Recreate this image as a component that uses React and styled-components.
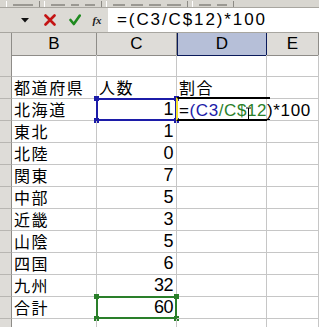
import styled, { createGlobalStyle } from "styled-components";

const GlobalStyle = createGlobalStyle`
  html, body {
    margin: 0;
    padding: 0;
    background: #ffffff;
    overflow: hidden;
  }
  body {
    font-family: "Noto Sans CJK JP", "Liberation Sans", sans-serif;
  }
`;

const Window = styled.div`
  width: 319px;
  height: 327px;
  overflow: hidden;
  background: #ffffff;
`;

const Toolbar = styled.div`
  height: 8px;
  background: #d8d6d0;
  border-bottom: 1px solid #a8a6a0;
  display: flex;
  align-items: flex-end;
  gap: 4px;
  padding-left: 6px;
  box-sizing: border-box;
  overflow: hidden;
`;

const ToolGroup = styled.div`
  display: flex;
  gap: 6px;
  height: 6px;
  padding: 0 6px;
  border-right: 1px solid #8c8a84;
  border-left: 1px solid #ffffff;
`;

const ToolStub = styled.div`
  width: ${(p) => p.$w || 10}px;
  height: 3px;
  border-bottom: 2px solid #9a9892;
`;

const FormulaBar = styled.div`
  height: 25px;
  display: flex;
  background: #dcdad5;
  border-bottom: 1px solid #a8a6a0;
  box-sizing: border-box;
`;

const FormulaButtons = styled.div`
  width: 108px;
  display: flex;
  align-items: center;
  padding-left: 19px;
  box-sizing: border-box;
`;

const IconSlot = styled.div`
  width: ${(p) => p.$w}px;
  margin-left: ${(p) => p.$ml || 0}px;
  display: flex;
  align-items: center;
  justify-content: center;
`;

const FxLabel = styled.span`
  font-family: "Liberation Serif", serif;
  font-style: italic;
  font-weight: bold;
  font-size: 11px;
  color: #202020;
`;

const FormulaInput = styled.div`
  flex: 1;
  background: #ffffff;
  font-family: "Liberation Sans", sans-serif;
  font-size: 17px;
  line-height: 24px;
  padding-left: 9px;
  color: #000000;
  white-space: nowrap;
  letter-spacing: 1.9px;
`;

const Sheet = styled.div`
  display: grid;
  grid-template-columns: 12px 85px 80px 90px 1fr;
  grid-auto-rows: 22px;
`;

const ColHeader = styled.div`
  height: 23px;
  background: ${(p) => (p.$active ? "#b6bfd8" : "#dedcd8")};
  border-right: 1px solid ${(p) => (p.$active ? "#0a1a5a" : "#8e8c88")};
  border-bottom: 1px solid ${(p) => (p.$active ? "#0a1a5a" : "#8e8c88")};
  border-left: ${(p) => (p.$active ? "1px solid #0a1a5a" : "none")};
  box-sizing: border-box;
  font-family: "Liberation Sans", sans-serif;
  font-size: 17px;
  line-height: 22px;
  text-align: center;
  color: #000000;
`;

const RowHeader = styled.div`
  background: #dedcd8;
  border-right: 1px solid #8e8c88;
  border-bottom: 1px solid #b8b6b2;
  box-sizing: border-box;
`;

const Cell = styled.div`
  position: relative;
  border-right: 1px solid #c6c6c6;
  border-bottom: 1px solid #c6c6c6;
  box-sizing: border-box;
  font-size: ${(p) => (p.$num ? "18px" : "16px")};
  line-height: 21px;
  padding: 0 ${(p) => (p.$num ? "3px" : "2px")};
  text-align: ${(p) => (p.$num ? "right" : "left")};
  font-family: ${(p) =>
    p.$num
      ? '"Liberation Sans", sans-serif'
      : '"Noto Sans CJK JP", sans-serif'};
  letter-spacing: ${(p) => (p.$num ? "-0.5px" : "1.6px")};
  color: #000000;
  white-space: nowrap;
  overflow: visible;
`;

const RangeBox = styled.div`
  position: absolute;
  left: -1px;
  top: -1px;
  right: -1px;
  bottom: -1px;
  border: 2px solid ${(p) => p.$color};
  pointer-events: none;
`;

const Handle = styled.span`
  position: absolute;
  width: 5px;
  height: 5px;
  background: ${(p) => p.$color};
  ${(p) => (p.$x === "l" ? "left: -4px;" : "right: -4px;")}
  ${(p) => (p.$y === "t" ? "top: -4px;" : "bottom: -4px;")}
`;

const EditBox = styled.div`
  position: absolute;
  left: -1px;
  top: -2px;
  width: 92px;
  bottom: -1px;
  border-top: 2px solid #000000;
  border-bottom: 2px solid #000000;
  border-left: 2px solid #f2e030;
  pointer-events: none;
`;

const EditText = styled.span`
  position: relative;
  z-index: 2;
  font-family: "Liberation Sans", sans-serif;
  font-size: 17px;
  letter-spacing: 0.6px;
`;

const Cursor = styled.svg`
  position: absolute;
  left: 68px;
  top: 8px;
  z-index: 3;
`;

const Ref = styled.span`
  color: ${(p) => p.$color};
`;

const BLUE = "#1c1ca8";
const GREEN = "#2a7f2a";

const rows = [
  ["", ""],
  ["都道府県", "人数"],
  ["北海道", "1"],
  ["東北", "1"],
  ["北陸", "0"],
  ["関東", "7"],
  ["中部", "5"],
  ["近畿", "3"],
  ["山陰", "5"],
  ["四国", "6"],
  ["九州", "32"],
  ["合計", "60"],
  ["", ""],
];

function Corners({ color }) {
  return (
    <>
      <Handle $color={color} $x="l" $y="t" />
      <Handle $color={color} $x="r" $y="t" />
      <Handle $color={color} $x="l" $y="b" />
      <Handle $color={color} $x="r" $y="b" />
    </>
  );
}

function Formula() {
  return (
    <>
      =<Ref $color={BLUE}>(C3</Ref>
      <Ref $color={GREEN}>/C$12</Ref>)*100
    </>
  );
}

export default function App() {
  return (
    <Window>
      <GlobalStyle />
      <Toolbar>
        <ToolGroup>
          <ToolStub $w={20} />
        </ToolGroup>
        <ToolGroup>
          <ToolStub $w={14} />
          <ToolStub $w={8} />
          <ToolStub $w={10} />
        </ToolGroup>
        <ToolGroup>
          <ToolStub $w={12} />
          <ToolStub $w={12} />
          <ToolStub $w={12} />
          <ToolStub $w={14} />
        </ToolGroup>
        <ToolGroup>
          <ToolStub $w={12} />
          <ToolStub $w={10} />
        </ToolGroup>
      </Toolbar>
      <FormulaBar>
        <FormulaButtons>
          <IconSlot $w={12}>
            <svg width="8" height="5" viewBox="0 0 8 5">
              <path d="M0 0 H8 L4 4.5 Z" fill="#111" />
            </svg>
          </IconSlot>
          <IconSlot $w={14} $ml={12}>
            <svg width="12" height="12" viewBox="0 0 12 12">
              <path
                d="M1.5 1.5 L10.5 10.5 M10.5 1.5 L1.5 10.5"
                stroke="#c41414"
                strokeWidth="2.6"
                strokeLinecap="round"
              />
            </svg>
          </IconSlot>
          <IconSlot $w={14} $ml={11}>
            <svg width="12" height="12" viewBox="0 0 12 12">
              <path
                d="M1.5 6 L4.8 10 L10.8 1.5"
                stroke="#1f8a1f"
                strokeWidth="2.6"
                fill="none"
                strokeLinecap="round"
                strokeLinejoin="round"
              />
            </svg>
          </IconSlot>
          <IconSlot $w={14} $ml={8}>
            <FxLabel>fx</FxLabel>
          </IconSlot>
        </FormulaButtons>
        <FormulaInput>=(C3/C$12)*100</FormulaInput>
      </FormulaBar>
      <Sheet>
        <ColHeader />
        <ColHeader>B</ColHeader>
        <ColHeader>C</ColHeader>
        <ColHeader $active>D</ColHeader>
        <ColHeader>E</ColHeader>
        {rows.map(([name, num], i) => (
          <Row key={i} index={i} name={name} num={num} />
        ))}
      </Sheet>
    </Window>
  );
}

function Row({ index, name, num }) {
  const isRef = index === 2;
  const isTotal = index === 11;
  return (
    <>
      <RowHeader />
      <Cell>{name}</Cell>
      <Cell $num={index !== 1}>
        {index === 1 ? "人数" : num}
        {isRef && (
          <RangeBox $color={BLUE}>
            <Corners color={BLUE} />
          </RangeBox>
        )}
        {isTotal && (
          <RangeBox $color={GREEN}>
            <Corners color={GREEN} />
          </RangeBox>
        )}
      </Cell>
      <Cell>
        {index === 1 && "割合"}
        {isRef && (
          <>
            <EditBox />
            <EditText>
              <Formula />
            </EditText>
            <Cursor width="7" height="14" viewBox="0 0 7 14">
              <path
                d="M1 1 H6 M3.5 1 V13 M1 13 H6"
                stroke="#000"
                strokeWidth="1"
                fill="none"
              />
            </Cursor>
          </>
        )}
      </Cell>
      <Cell />
    </>
  );
}
